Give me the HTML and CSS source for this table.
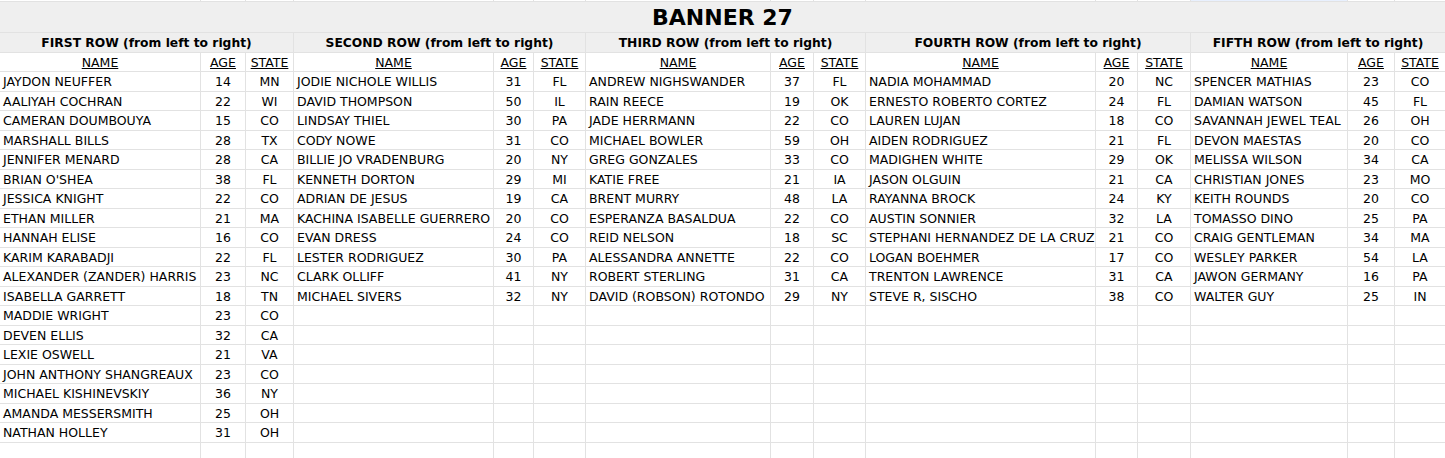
FILE: index.html
```html
<!DOCTYPE html>
<html>
<head>
<meta charset="utf-8">
<title>Banner 27</title>
<link rel="stylesheet" href="styles.css">
</head>
<body>
<div class="sheet">
  <div class="edge"></div><div class="edge"></div><div class="edge"></div><div class="edge"></div><div class="edge"></div><div class="edge"></div><div class="edge"></div><div class="edge"></div><div class="edge"></div><div class="edge"></div><div class="edge"></div><div class="edge"></div><div class="edge sel"></div><div class="edge"></div><div class="edge"></div>
  <div class="title">BANNER 27</div>
  <div class="group">FIRST ROW (from left to right)</div>
  <div class="group">SECOND ROW (from left to right)</div>
  <div class="group">THIRD ROW (from left to right)</div>
  <div class="group">FOURTH ROW (from left to right)</div>
  <div class="group">FIFTH ROW (from left to right)</div>
  <div class="h">NAME</div><div class="h">AGE</div><div class="h">STATE</div>
  <div class="h">NAME</div><div class="h">AGE</div><div class="h">STATE</div>
  <div class="h">NAME</div><div class="h">AGE</div><div class="h">STATE</div>
  <div class="h">NAME</div><div class="h">AGE</div><div class="h">STATE</div>
  <div class="h">NAME</div><div class="h">AGE</div><div class="h">STATE</div>

  <div class="n">JAYDON NEUFFER</div><div class="c">14</div><div class="c">MN</div><div class="n">JODIE NICHOLE WILLIS</div><div class="c">31</div><div class="c">FL</div><div class="n">ANDREW NIGHSWANDER</div><div class="c">37</div><div class="c">FL</div><div class="n">NADIA MOHAMMAD</div><div class="c">20</div><div class="c">NC</div><div class="n">SPENCER MATHIAS</div><div class="c">23</div><div class="c">CO</div>
  <div class="n">AALIYAH COCHRAN</div><div class="c">22</div><div class="c">WI</div><div class="n">DAVID THOMPSON</div><div class="c">50</div><div class="c">IL</div><div class="n">RAIN REECE</div><div class="c">19</div><div class="c">OK</div><div class="n">ERNESTO ROBERTO CORTEZ</div><div class="c">24</div><div class="c">FL</div><div class="n">DAMIAN WATSON</div><div class="c">45</div><div class="c">FL</div>
  <div class="n">CAMERAN DOUMBOUYA</div><div class="c">15</div><div class="c">CO</div><div class="n">LINDSAY THIEL</div><div class="c">30</div><div class="c">PA</div><div class="n">JADE HERRMANN</div><div class="c">22</div><div class="c">CO</div><div class="n">LAUREN LUJAN</div><div class="c">18</div><div class="c">CO</div><div class="n">SAVANNAH JEWEL TEAL</div><div class="c">26</div><div class="c">OH</div>
  <div class="n">MARSHALL BILLS</div><div class="c">28</div><div class="c">TX</div><div class="n">CODY NOWE</div><div class="c">31</div><div class="c">CO</div><div class="n">MICHAEL BOWLER</div><div class="c">59</div><div class="c">OH</div><div class="n">AIDEN RODRIGUEZ</div><div class="c">21</div><div class="c">FL</div><div class="n">DEVON MAESTAS</div><div class="c">20</div><div class="c">CO</div>
  <div class="n">JENNIFER MENARD</div><div class="c">28</div><div class="c">CA</div><div class="n">BILLIE JO VRADENBURG</div><div class="c">20</div><div class="c">NY</div><div class="n">GREG GONZALES</div><div class="c">33</div><div class="c">CO</div><div class="n">MADIGHEN WHITE</div><div class="c">29</div><div class="c">OK</div><div class="n">MELISSA WILSON</div><div class="c">34</div><div class="c">CA</div>
  <div class="n">BRIAN O'SHEA</div><div class="c">38</div><div class="c">FL</div><div class="n">KENNETH DORTON</div><div class="c">29</div><div class="c">MI</div><div class="n">KATIE FREE</div><div class="c">21</div><div class="c">IA</div><div class="n">JASON OLGUIN</div><div class="c">21</div><div class="c">CA</div><div class="n">CHRISTIAN JONES</div><div class="c">23</div><div class="c">MO</div>
  <div class="n">JESSICA KNIGHT</div><div class="c">22</div><div class="c">CO</div><div class="n">ADRIAN DE JESUS</div><div class="c">19</div><div class="c">CA</div><div class="n">BRENT MURRY</div><div class="c">48</div><div class="c">LA</div><div class="n">RAYANNA BROCK</div><div class="c">24</div><div class="c">KY</div><div class="n">KEITH ROUNDS</div><div class="c">20</div><div class="c">CO</div>
  <div class="n">ETHAN MILLER</div><div class="c">21</div><div class="c">MA</div><div class="n">KACHINA ISABELLE GUERRERO</div><div class="c">20</div><div class="c">CO</div><div class="n">ESPERANZA BASALDUA</div><div class="c">22</div><div class="c">CO</div><div class="n">AUSTIN SONNIER</div><div class="c">32</div><div class="c">LA</div><div class="n">TOMASSO DINO</div><div class="c">25</div><div class="c">PA</div>
  <div class="n">HANNAH ELISE</div><div class="c">16</div><div class="c">CO</div><div class="n">EVAN DRESS</div><div class="c">24</div><div class="c">CO</div><div class="n">REID NELSON</div><div class="c">18</div><div class="c">SC</div><div class="n">STEPHANI HERNANDEZ DE LA CRUZ</div><div class="c">21</div><div class="c">CO</div><div class="n">CRAIG GENTLEMAN</div><div class="c">34</div><div class="c">MA</div>
  <div class="n">KARIM KARABADJI</div><div class="c">22</div><div class="c">FL</div><div class="n">LESTER RODRIGUEZ</div><div class="c">30</div><div class="c">PA</div><div class="n">ALESSANDRA ANNETTE</div><div class="c">22</div><div class="c">CO</div><div class="n">LOGAN BOEHMER</div><div class="c">17</div><div class="c">CO</div><div class="n">WESLEY PARKER</div><div class="c">54</div><div class="c">LA</div>
  <div class="n">ALEXANDER (ZANDER) HARRIS</div><div class="c">23</div><div class="c">NC</div><div class="n">CLARK OLLIFF</div><div class="c">41</div><div class="c">NY</div><div class="n">ROBERT STERLING</div><div class="c">31</div><div class="c">CA</div><div class="n">TRENTON LAWRENCE</div><div class="c">31</div><div class="c">CA</div><div class="n">JAWON GERMANY</div><div class="c">16</div><div class="c">PA</div>
  <div class="n">ISABELLA GARRETT</div><div class="c">18</div><div class="c">TN</div><div class="n">MICHAEL SIVERS</div><div class="c">32</div><div class="c">NY</div><div class="n">DAVID (ROBSON) ROTONDO</div><div class="c">29</div><div class="c">NY</div><div class="n">STEVE R, SISCHO</div><div class="c">38</div><div class="c">CO</div><div class="n">WALTER GUY</div><div class="c">25</div><div class="c">IN</div>
  <div class="n">MADDIE WRIGHT</div><div class="c">23</div><div class="c">CO</div><div class="n"></div><div class="c"></div><div class="c"></div><div class="n"></div><div class="c"></div><div class="c"></div><div class="n"></div><div class="c"></div><div class="c"></div><div class="n"></div><div class="c"></div><div class="c"></div>
  <div class="n">DEVEN ELLIS</div><div class="c">32</div><div class="c">CA</div><div class="n"></div><div class="c"></div><div class="c"></div><div class="n"></div><div class="c"></div><div class="c"></div><div class="n"></div><div class="c"></div><div class="c"></div><div class="n"></div><div class="c"></div><div class="c"></div>
  <div class="n">LEXIE OSWELL</div><div class="c">21</div><div class="c">VA</div><div class="n"></div><div class="c"></div><div class="c"></div><div class="n"></div><div class="c"></div><div class="c"></div><div class="n"></div><div class="c"></div><div class="c"></div><div class="n"></div><div class="c"></div><div class="c"></div>
  <div class="n">JOHN ANTHONY SHANGREAUX</div><div class="c">23</div><div class="c">CO</div><div class="n"></div><div class="c"></div><div class="c"></div><div class="n"></div><div class="c"></div><div class="c"></div><div class="n"></div><div class="c"></div><div class="c"></div><div class="n"></div><div class="c"></div><div class="c"></div>
  <div class="n">MICHAEL KISHINEVSKIY</div><div class="c">36</div><div class="c">NY</div><div class="n"></div><div class="c"></div><div class="c"></div><div class="n"></div><div class="c"></div><div class="c"></div><div class="n"></div><div class="c"></div><div class="c"></div><div class="n"></div><div class="c"></div><div class="c"></div>
  <div class="n">AMANDA MESSERSMITH</div><div class="c">25</div><div class="c">OH</div><div class="n"></div><div class="c"></div><div class="c"></div><div class="n"></div><div class="c"></div><div class="c"></div><div class="n"></div><div class="c"></div><div class="c"></div><div class="n"></div><div class="c"></div><div class="c"></div>
  <div class="n">NATHAN HOLLEY</div><div class="c">31</div><div class="c">OH</div><div class="n"></div><div class="c"></div><div class="c"></div><div class="n"></div><div class="c"></div><div class="c"></div><div class="n"></div><div class="c"></div><div class="c"></div><div class="n"></div><div class="c"></div><div class="c"></div>
  <div class="n"></div><div class="c"></div><div class="c"></div><div class="n"></div><div class="c"></div><div class="c"></div><div class="n"></div><div class="c"></div><div class="c"></div><div class="n"></div><div class="c"></div><div class="c"></div><div class="n"></div><div class="c"></div><div class="c"></div>
</div>
</body>
</html>
```

FILE: styles.css
```css
html, body {
  margin: 0;
  padding: 0;
  background: #ffffff;
}

.sheet {
  display: grid;
  grid-template-columns: 200px 44px 47px 199px 39px 51px 184px 42px 51px 229px 41px 52px 156px 46px 50px;
  grid-template-rows: 1px 30px 19px 18px;
  grid-auto-rows: 19px 18px;
  gap: 1px;
  width: 1445px;
  height: 458px;
  overflow: hidden;
  background: #e2e2e2;
  font-family: "DejaVu Sans", Verdana, sans-serif;
  font-size: 12.5px;
  color: #000;
}

.sheet > div {
  background: #ffffff;
  white-space: nowrap;
  overflow: hidden;
  display: flex;
  align-items: center;
}

.sheet > .edge {
  background: #ffffff;
}

.sheet > .edge.sel {
  background: #e8f0fe;
}

.sheet > .title {
  grid-column: 1 / -1;
  background: #efefef;
  justify-content: center;
  font-weight: bold;
  font-size: 22px;
  padding-top: 1px;
}

.sheet > .group {
  grid-column: span 3;
  background: #efefef;
  justify-content: center;
  font-weight: bold;
  font-size: 12.3px;
}

.sheet > .h {
  justify-content: center;
  text-decoration: underline;
}

.sheet > .n {
  padding: 0 3px;
}

.sheet > .c {
  justify-content: center;
}
```
